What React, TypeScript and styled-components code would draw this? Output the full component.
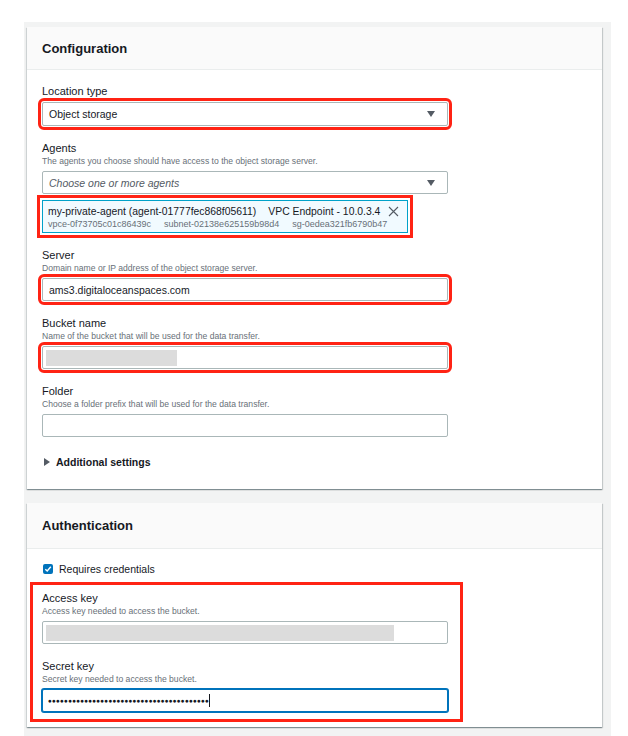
import React from "react";
import styled, { createGlobalStyle, css } from "styled-components";

const GlobalStyle = createGlobalStyle`
  body {
    margin: 0;
    background: #ffffff;
    font-family: "Liberation Sans", Arial, sans-serif;
    color: #16191f;
  }
`;

const Page = styled.div`
  margin: 22px 17px 0 24px;
  padding: 5px 9px 9px 3px;
  background: #f2f3f3;
  display: flex;
  flex-direction: column;
  gap: 14px;
`;

const Card = styled.section`
  background: #ffffff;
  box-shadow: 0 1px 1px 0 rgba(0, 28, 36, 0.3), 1px 1px 1px 0 rgba(0, 28, 36, 0.15),
    -1px 1px 1px 0 rgba(0, 28, 36, 0.1);
`;

const CardHeader = styled.header<{ $height: number }>`
  height: ${({ $height }) => $height}px;
  box-sizing: border-box;
  padding: 0 15px;
  display: flex;
  align-items: center;
  background: #fafafa;
  border-bottom: 1px solid #eaeded;
  font-size: 13px;
  font-weight: 700;
`;

const CardBody = styled.div<{ $top: number; $bottom: number }>`
  padding: ${({ $top, $bottom }) => `${$top}px 15px ${$bottom}px 15px`};
  display: flex;
  flex-direction: column;
  gap: 15px;
`;

const Field = styled.div`
  display: flex;
  flex-direction: column;
`;

const Label = styled.div`
  font-size: 11px;
  line-height: 14px;
  color: #16191f;
`;

const Description = styled.div`
  font-size: 8.6px;
  line-height: 12px;
  color: #687078;
`;

const highlight = css`
  outline: 3px solid #ff2314;
  outline-offset: 1px;
`;

const Control = styled.div<{ $highlight?: boolean; $focused?: boolean; $height?: number }>`
  margin-top: 4px;
  width: 406px;
  height: ${({ $height }) => $height ?? 23}px;
  box-sizing: border-box;
  border: 1px solid ${({ $focused }) => ($focused ? "#0073bb" : "#aab7b8")};
  border-radius: 2px;
  background: #ffffff;
  display: flex;
  align-items: center;
  padding: 0 12px 0 6px;
  font-size: 10.5px;
  ${({ $highlight }) => $highlight && highlight}
  ${({ $focused }) =>
    $focused &&
    css`
      box-shadow: 0 0 0 1px #0073bb;
    `}
`;

const ControlText = styled.span<{ $placeholder?: boolean }>`
  flex: 1;
  ${({ $placeholder }) =>
    $placeholder &&
    css`
      font-style: italic;
      color: #545b64;
    `}
`;

const Caret = styled.span`
  width: 0;
  height: 0;
  border-left: 4.5px solid transparent;
  border-right: 4.5px solid transparent;
  border-top: 6px solid #545b64;
`;

const Redacted = styled.span<{ $width: number }>`
  width: ${({ $width }) => $width}px;
  height: 16px;
  margin-left: -3px;
  background: #dcdcdc;
`;

const Token = styled.div`
  margin-top: 6px;
  width: 366px;
  height: 33px;
  box-sizing: border-box;
  padding: 4px 5px 0 5px;
  background: #f1faff;
  border: 1px solid #00a1c9;
  ${highlight}
  outline-offset: 2px;
`;

const TokenRow = styled.div<{ $small?: boolean }>`
  display: flex;
  align-items: center;
  gap: ${({ $small }) => ($small ? 13 : 12)}px;
  font-size: ${({ $small }) => ($small ? 9 : 10.4)}px;
  line-height: ${({ $small }) => ($small ? 12 : 13)}px;
  color: ${({ $small }) => ($small ? "#687078" : "#16191f")};
  white-space: nowrap;
`;

const CloseIcon = styled.svg`
  flex-shrink: 0;
  width: 11px;
  height: 11px;
  margin-left: -4px;
`;

const Expander = styled.div`
  margin-top: 3px;
  display: flex;
  align-items: center;
  gap: 6px;
  font-size: 10.5px;
  line-height: 14px;
  font-weight: 700;
  color: #16191f;
`;

const RightTriangle = styled.span`
  margin-left: 2px;
  width: 0;
  height: 0;
  border-top: 4px solid transparent;
  border-bottom: 4px solid transparent;
  border-left: 6px solid #545b64;
`;

const CheckRow = styled.label`
  display: flex;
  align-items: center;
  gap: 6px;
  font-size: 10.5px;
  line-height: 14px;
`;

const CheckBox = styled.span`
  width: 10px;
  height: 10px;
  border-radius: 2px;
  background: #0073bb;
  display: flex;
  align-items: center;
  justify-content: center;
  margin-left: 1px;
`;

const HighlightGroup = styled.div`
  margin: -9px 0 0 -12px;
  width: 433px;
  box-sizing: border-box;
  border: 3px solid #ff2314;
  padding: 6px 12px 7px 9px;
  display: flex;
  flex-direction: column;
  gap: 15px;
`;

const Dots = styled.span`
  font-size: 6.5px;
  letter-spacing: 0.1px;
  color: #16191f;
  margin-left: -1px;
`;

const Cursor = styled.span`
  display: inline-block;
  width: 1px;
  height: 13px;
  background: #16191f;
  vertical-align: middle;
`;

const SelectBox: React.FC<{ text: string; placeholder?: boolean; highlight?: boolean; height?: number }> = ({
  text,
  placeholder,
  highlight,
  height,
}) => (
  <Control $highlight={highlight} $height={height}>
    <ControlText $placeholder={placeholder}>{text}</ControlText>
    <Caret />
  </Control>
);

const App: React.FC = () => {
  return (
    <>
      <GlobalStyle />
      <Page>
        <Card>
          <CardHeader $height={43}>Configuration</CardHeader>
          <CardBody $top={14} $bottom={20}>
            <Field>
              <Label>Location type</Label>
              <SelectBox text="Object storage" highlight height={24} />
            </Field>
            <Field>
              <Label>Agents</Label>
              <Description>The agents you choose should have access to the object storage server.</Description>
              <SelectBox text="Choose one or more agents" placeholder />
              <Token>
                <TokenRow>
                  <span>my-private-agent (agent-01777fec868f05611)</span>
                  <span>VPC Endpoint - 10.0.3.4</span>
                  <CloseIcon viewBox="0 0 11 11">
                    <path d="M1 1 L10 10 M10 1 L1 10" stroke="#545b64" strokeWidth="1.1" fill="none" />
                  </CloseIcon>
                </TokenRow>
                <TokenRow $small>
                  <span>vpce-0f73705c01c86439c</span>
                  <span>subnet-02138e625159b98d4</span>
                  <span>sg-0edea321fb6790b47</span>
                </TokenRow>
              </Token>
            </Field>
            <Field>
              <Label>Server</Label>
              <Description>Domain name or IP address of the object storage server.</Description>
              <Control $highlight>
                <ControlText>ams3.digitaloceanspaces.com</ControlText>
              </Control>
            </Field>
            <Field>
              <Label>Bucket name</Label>
              <Description>Name of the bucket that will be used for the data transfer.</Description>
              <Control $highlight>
                <Redacted $width={131} />
              </Control>
            </Field>
            <Field>
              <Label>Folder</Label>
              <Description>Choose a folder prefix that will be used for the data transfer.</Description>
              <Control />
            </Field>
            <Expander>
              <RightTriangle />
              Additional settings
            </Expander>
          </CardBody>
        </Card>
        <Card>
          <CardHeader $height={46}>Authentication</CardHeader>
          <CardBody $top={13} $bottom={5}>
            <CheckRow>
              <CheckBox>
                <svg width="8" height="8" viewBox="0 0 8 8">
                  <path d="M1.3 4.2 L3.2 6 L6.8 1.8" stroke="#ffffff" strokeWidth="1.4" fill="none" />
                </svg>
              </CheckBox>
              Requires credentials
            </CheckRow>
            <HighlightGroup>
              <Field>
                <Label>Access key</Label>
                <Description>Access key needed to access the bucket.</Description>
                <Control>
                  <Redacted $width={348} />
                </Control>
              </Field>
              <Field>
                <Label>Secret key</Label>
                <Description>Secret key needed to access the bucket.</Description>
                <Control $focused>
                  <Dots>{"●".repeat(40)}</Dots>
                  <Cursor />
                </Control>
              </Field>
            </HighlightGroup>
          </CardBody>
        </Card>
      </Page>
    </>
  );
};

export default App;
